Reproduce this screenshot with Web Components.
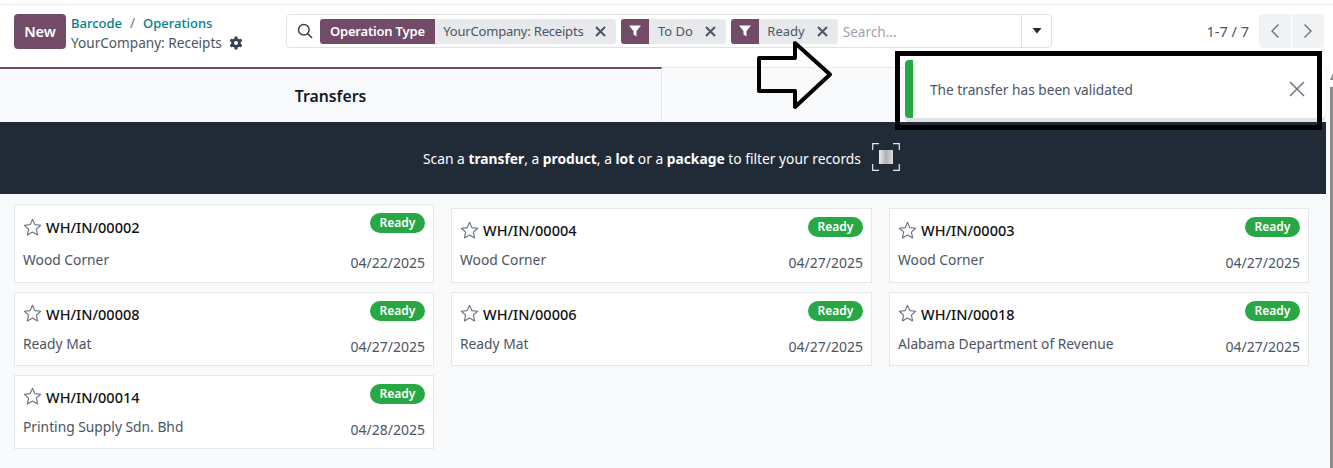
<!DOCTYPE html>
<html>
<head>
<meta charset="utf-8">
<title>Receipts</title>
<style>
    html, body {
        background: #fff;
        height: 468px;
        margin: 0;
        overflow: hidden;
    }

    body {
        color: #4b5563;
        font-family: "Noto Sans", sans-serif;
        font-size: 14px;
        position: relative;
    }
</style>
</head>
<body>
    <control-panel></control-panel>
    <view-area>
        <transfer-tabs></transfer-tabs>
        <scan-banner></scan-banner>
        <card-board>
            <transfer-card slot="one" tall ref="WH/IN/00002" date="04/22/2025">Wood Corner</transfer-card>
            <transfer-card slot="one" ref="WH/IN/00008" date="04/27/2025">Ready Mat</transfer-card>
            <transfer-card slot="one" ref="WH/IN/00014" date="04/28/2025">Printing Supply Sdn. Bhd</transfer-card>
            <transfer-card slot="two" ref="WH/IN/00004" date="04/27/2025">Wood Corner</transfer-card>
            <transfer-card slot="two" ref="WH/IN/00006" date="04/27/2025">Ready Mat</transfer-card>
            <transfer-card slot="three" ref="WH/IN/00003" date="04/27/2025">Wood Corner</transfer-card>
            <transfer-card slot="three" ref="WH/IN/00018" date="04/27/2025">Alabama Department of Revenue</transfer-card>
        </card-board>
    </view-area>
    <toast-message>The transfer has been validated</toast-message>
    <call-out></call-out>

<script>
class SearchFacet extends HTMLElement {
    constructor () {
        super()
        this.attachShadow({mode: 'open'})
    }

    connectedCallback () {
        const label = this.getAttribute('label')
        const icon = label
            ? `<b>${label}</b>`
            : `<b class="icon"><svg width="14" height="14" viewBox="0 0 14 14"><path d="M1 1.5h12L8.5 7v5.5l-3-2V7z" fill="#fff"/></svg></b>`
        this.shadowRoot.innerHTML = `
            <style>
                :host {
                    align-items: stretch;
                    background: #e7e9ed;
                    border-radius: 3px;
                    display: inline-flex;
                    font-size: 13px;
                    height: 25px;
                    line-height: 25px;
                    white-space: nowrap;
                }

                :host([label]) {
                    letter-spacing: -0.2px;
                }

                b {
                    background: #714b67;
                    border-radius: 3px 0 0 3px;
                    color: #fff;
                    font-weight: 600;
                    padding: 0 10px;
                }

                b.icon {
                    align-items: center;
                    display: flex;
                    padding: 0 7px;
                }

                span {
                    color: #4b5563;
                    padding: 0 12px 0 8.5px;
                }

                svg.close {
                    align-self: center;
                    margin-right: 10px;
                }
            </style>
            ${icon}
            <span><slot></slot></span>
            <svg class="close" width="11" height="11" viewBox="0 0 11 11"><path d="M1 1l9 9M10 1l-9 9" stroke="#4b5563" stroke-width="2"/></svg>
        `
    }
}

class ControlPanel extends HTMLElement {
    constructor () {
        super()
        this.attachShadow({mode: 'open'})
    }

    connectedCallback () {
        this.shadowRoot.innerHTML = `
            <style>
                :host {
                    background: #fff;
                    border-top: 1px solid #e8eaed;
                    box-sizing: border-box;
                    display: flex;
                    height: 63px;
                    margin-top: 4px;
                    padding: 9px 9px 0 14px;
                }

                .new {
                    background: #714b67;
                    border-radius: 4px;
                    color: #fff;
                    font-size: 14.5px;
                    font-weight: 600;
                    height: 35px;
                    line-height: 35px;
                    text-align: center;
                    width: 52px;
                }

                .crumbs {
                    font-size: 13.6px;
                    line-height: 19px;
                    margin-left: 5px;
                    margin-top: -1px;
                    width: 215px;
                }

                .crumbs a {
                    color: #017e84;
                    font-size: 13px;
                    font-weight: 500;
                }

                .crumbs i {
                    color: #6b7280;
                    font-style: normal;
                    margin: 0 8px;
                }

                .crumbs div {
                    align-items: center;
                    display: flex;
                    gap: 7px;
                }

                .search {
                    align-items: center;
                    border: 1px solid #dee2e6;
                    border-radius: 4px;
                    box-sizing: border-box;
                    display: flex;
                    gap: 5px;
                    height: 34px;
                    padding-left: 10px;
                    width: 766px;
                }

                .search .glass {
                    margin-right: 2px;
                }

                .search em {
                    color: #9ca3af;
                    flex: 1;
                    font-size: 13.6px;
                    font-style: normal;
                }

                .caret {
                    align-items: center;
                    align-self: stretch;
                    border-left: 1px solid #dee2e6;
                    display: flex;
                    justify-content: center;
                    width: 29px;
                }

                .pager {
                    align-items: center;
                    display: flex;
                    flex: 1;
                    height: 34px;
                    justify-content: flex-end;
                }

                .pager span {
                    font-size: 14.5px;
                    margin-right: 9px;
                }

                .pager button {
                    align-items: center;
                    background: #f1f2f4;
                    border: 0;
                    display: flex;
                    height: 34px;
                    justify-content: center;
                    margin-left: 1px;
                    padding: 0;
                    width: 32px;
                }

                .pager button:first-of-type {
                    border-radius: 4px 0 0 4px;
                }

                .pager button:last-of-type {
                    border-radius: 0 4px 4px 0;
                }
            </style>
            <div class="new">New</div>
            <div class="crumbs">
                <a>Barcode</a><i>/</i><a>Operations</a>
                <div>YourCompany: Receipts
                    <svg width="14" height="14" viewBox="0 0 14 14">
                        <g fill="#374151">
                            <circle cx="7" cy="7" r="4.8"/>
                            <rect x="5.5" y="0.5" width="3" height="13" rx=".6"/>
                            <rect x="5.5" y="0.5" width="3" height="13" rx=".6" transform="rotate(60 7 7)"/>
                            <rect x="5.5" y="0.5" width="3" height="13" rx=".6" transform="rotate(120 7 7)"/>
                        </g>
                        <circle cx="7" cy="7" r="2" fill="#fff"/>
                    </svg>
                </div>
            </div>
            <div class="search">
                <svg class="glass" width="16" height="16" viewBox="0 0 16 16" fill="none" stroke="#374151" stroke-width="1.5"><circle cx="6.8" cy="6.8" r="5.3"/><path d="M10.6 10.6l4.4 4.4"/></svg>
                <search-facet label="Operation Type">YourCompany: Receipts</search-facet>
                <search-facet>To Do</search-facet>
                <search-facet>Ready</search-facet>
                <em>Search...</em>
                <div class="caret"><svg width="10" height="6" viewBox="0 0 10 6"><path d="M.5 0h9L5 5.5z" fill="#1f2937"/></svg></div>
            </div>
            <div class="pager">
                <span>1-7 / 7</span>
                <button><svg width="10" height="16" viewBox="0 0 10 16" fill="none" stroke="#6b7280" stroke-width="1.4"><path d="M8.5 1.5L2 8l6.5 6.5"/></svg></button>
                <button><svg width="10" height="16" viewBox="0 0 10 16" fill="none" stroke="#6b7280" stroke-width="1.4"><path d="M1.5 1.5L8 8l-6.5 6.5"/></svg></button>
            </div>
        `
    }
}

class ViewArea extends HTMLElement {
    constructor () {
        super()
        this.attachShadow({mode: 'open'})
    }

    connectedCallback () {
        this.shadowRoot.innerHTML = `
            <style>
                :host {
                    display: flex;
                    height: 401px;
                }

                main {
                    background: #f9fafb;
                    display: flex;
                    flex-direction: column;
                    width: 1330px;
                }

                .scrollbar {
                    background: linear-gradient(#fff 20px, #8c8c8c 20px);
                    flex: 1;
                    position: relative;
                }

                .scrollbar::before {
                    border-bottom: 7px solid #8c8c8c;
                    border-left: 3px solid transparent;
                    border-right: 3px solid transparent;
                    content: "";
                    left: 0;
                    position: absolute;
                    top: 6px;
                }
            </style>
            <main><slot></slot></main>
            <div class="scrollbar"></div>
        `
    }
}

class TransferTabs extends HTMLElement {
    constructor () {
        super()
        this.attachShadow({mode: 'open'})
    }

    connectedCallback () {
        this.shadowRoot.innerHTML = `
            <style>
                :host {
                    display: flex;
                    height: 55px;
                    margin-right: 4px;
                }

                div {
                    box-sizing: border-box;
                    flex: 1;
                }

                .active {
                    align-items: center;
                    border-right: 1px solid #e5e7eb;
                    border-top: 2px solid #714b67;
                    color: #111827;
                    display: flex;
                    flex: 0 0 662px;
                    font-size: 15.8px;
                    font-weight: 600;
                    justify-content: center;
                }

                .idle {
                    border-top: 1px solid #e5e7eb;
                }
            </style>
            <div class="active">Transfers</div>
            <div class="idle"></div>
        `
    }
}

class ScanBanner extends HTMLElement {
    constructor () {
        super()
        this.attachShadow({mode: 'open'})
    }

    connectedCallback () {
        this.shadowRoot.innerHTML = `
            <style>
                :host {
                    align-items: center;
                    background: #212b38;
                    color: #fff;
                    display: flex;
                    font-size: 13.8px;
                    gap: 11px;
                    height: 72px;
                    justify-content: center;
                    margin-right: 4px;
                    padding-right: 3px;
                }

                .scan {
                    flex: none;
                    height: 28px;
                    margin-top: -2px;
                    width: 28px;
                }
            </style>
            <span>Scan a <b>transfer</b>, a <b>product</b>, a <b>lot</b> or a <b>package</b> to filter your records</span>
            <svg class="scan" viewBox="0 0 28 28" fill="none">
                <defs>
                    <linearGradient id="bars">
                        <stop offset="0" stop-color="#ececec"/>
                        <stop offset=".5" stop-color="#aeb0b3"/>
                        <stop offset="1" stop-color="#dcdcdc"/>
                    </linearGradient>
                </defs>
                <path d="M.7 7V.7H7M21 .7h6.3V7M.7 21v6.3H7M21 27.3h6.3V21" stroke="#e5e7eb" stroke-width="1.2"/>
                <rect x="7" y="7" width="14" height="14" fill="url(#bars)"/>
            </svg>
        `
    }
}

class CardBoard extends HTMLElement {
    constructor () {
        super()
        this.attachShadow({mode: 'open'})
    }

    connectedCallback () {
        this.shadowRoot.innerHTML = `
            <style>
                :host {
                    display: grid;
                    grid-template-columns: 420px 421px 420px;
                    column-gap: 17px;
                    padding: 10px 0 0 14px;
                }

                div {
                    display: flex;
                    flex-direction: column;
                    gap: 8.5px;
                }

                .late {
                    gap: 9px;
                    padding-top: 4px;
                }
            </style>
            <div><slot name="one"></slot></div>
            <div class="late"><slot name="two"></slot></div>
            <div class="late"><slot name="three"></slot></div>
        `
    }
}

class TransferCard extends HTMLElement {
    constructor () {
        super()
        this.attachShadow({mode: 'open'})
    }

    connectedCallback () {
        const ref = this.getAttribute('ref')
        const date = this.getAttribute('date')
        this.shadowRoot.innerHTML = `
            <style>
                :host {
                    background: #fff;
                    border: 1px solid #e5e7eb;
                    box-sizing: border-box;
                    display: flex;
                    flex-direction: column;
                    height: 74.5px;
                    padding: 8px 8px 0;
                }

                :host([tall]) {
                    height: 79px;
                }

                .top,
                .bottom {
                    display: flex;
                    justify-content: space-between;
                }

                .title {
                    align-items: center;
                    color: #111;
                    display: flex;
                    font-size: 14.5px;
                    font-weight: 500;
                    gap: 4px;
                    margin-top: 3px;
                }

                :host([tall]) .title {
                    margin-top: 4px;
                }

                .badge {
                    background: #28a745;
                    border-radius: 11px;
                    color: #fff;
                    font-size: 12px;
                    font-weight: 600;
                    height: 20px;
                    line-height: 20px;
                    text-align: center;
                    width: 55px;
                }

                .bottom {
                    font-size: 13.8px;
                    margin-top: 10px;
                }

                :host([tall]) .bottom {
                    margin-top: 13px;
                }

                .date {
                    font-size: 14px;
                    margin-top: 3px;
                }
            </style>
            <div class="top">
                <span class="title">
                    <svg width="19" height="19" viewBox="0 0 18 18"><path d="M9 1.3l2.3 5 5.4.6-4 3.7 1.1 5.4L9 13.3 4.2 16l1.1-5.4-4-3.7 5.4-.6z" fill="none" stroke="#6b7280" stroke-width="1.1" stroke-linejoin="round"/></svg>
                    ${ref}
                </span>
                <span class="badge">Ready</span>
            </div>
            <div class="bottom">
                <span><slot></slot></span>
                <span class="date">${date}</span>
            </div>
        `
    }
}

class ToastMessage extends HTMLElement {
    constructor () {
        super()
        this.attachShadow({mode: 'open'})
    }

    connectedCallback () {
        this.shadowRoot.innerHTML = `
            <style>
                :host {
                    align-items: center;
                    background: #fff;
                    border-radius: 4px;
                    box-shadow: 0 4px 0 #dfe1e4;
                    box-sizing: border-box;
                    display: flex;
                    height: 58px;
                    justify-content: space-between;
                    left: 905px;
                    padding: 0 20px 0 25px;
                    position: absolute;
                    top: 60px;
                    width: 420px;
                }

                :host::before {
                    background: #28a745;
                    border-radius: 4px 0 0 4px;
                    bottom: 0;
                    content: "";
                    left: 0;
                    position: absolute;
                    top: 0;
                    width: 8px;
                }

                span {
                    color: #4b5563;
                    font-size: 13.7px;
                }
            </style>
            <span><slot></slot></span>
            <svg width="16" height="16" viewBox="0 0 16 16"><path d="M1 1l14 14M15 1L1 15" stroke="#6b7280" stroke-width="1.5"/></svg>
        `
    }
}

class CallOut extends HTMLElement {
    constructor () {
        super()
        this.attachShadow({mode: 'open'})
    }

    connectedCallback () {
        this.shadowRoot.innerHTML = `
            <style>
                :host {
                    inset: 0;
                    pointer-events: none;
                    position: absolute;
                }

                svg {
                    display: block;
                }
            </style>
            <svg width="1333" height="468" viewBox="0 0 1333 468" fill="none" stroke="#000">
                <path d="M759 58H795V43L830 74.5L795 107V91H759Z" stroke-width="4" stroke-linejoin="round"/>
                <rect x="897.5" y="53.5" width="422" height="74" stroke-width="5"/>
            </svg>
        `
    }
}

window.customElements.define('search-facet', SearchFacet)
window.customElements.define('control-panel', ControlPanel)
window.customElements.define('view-area', ViewArea)
window.customElements.define('transfer-tabs', TransferTabs)
window.customElements.define('scan-banner', ScanBanner)
window.customElements.define('card-board', CardBoard)
window.customElements.define('transfer-card', TransferCard)
window.customElements.define('toast-message', ToastMessage)
window.customElements.define('call-out', CallOut)
</script>
</body>
</html>
